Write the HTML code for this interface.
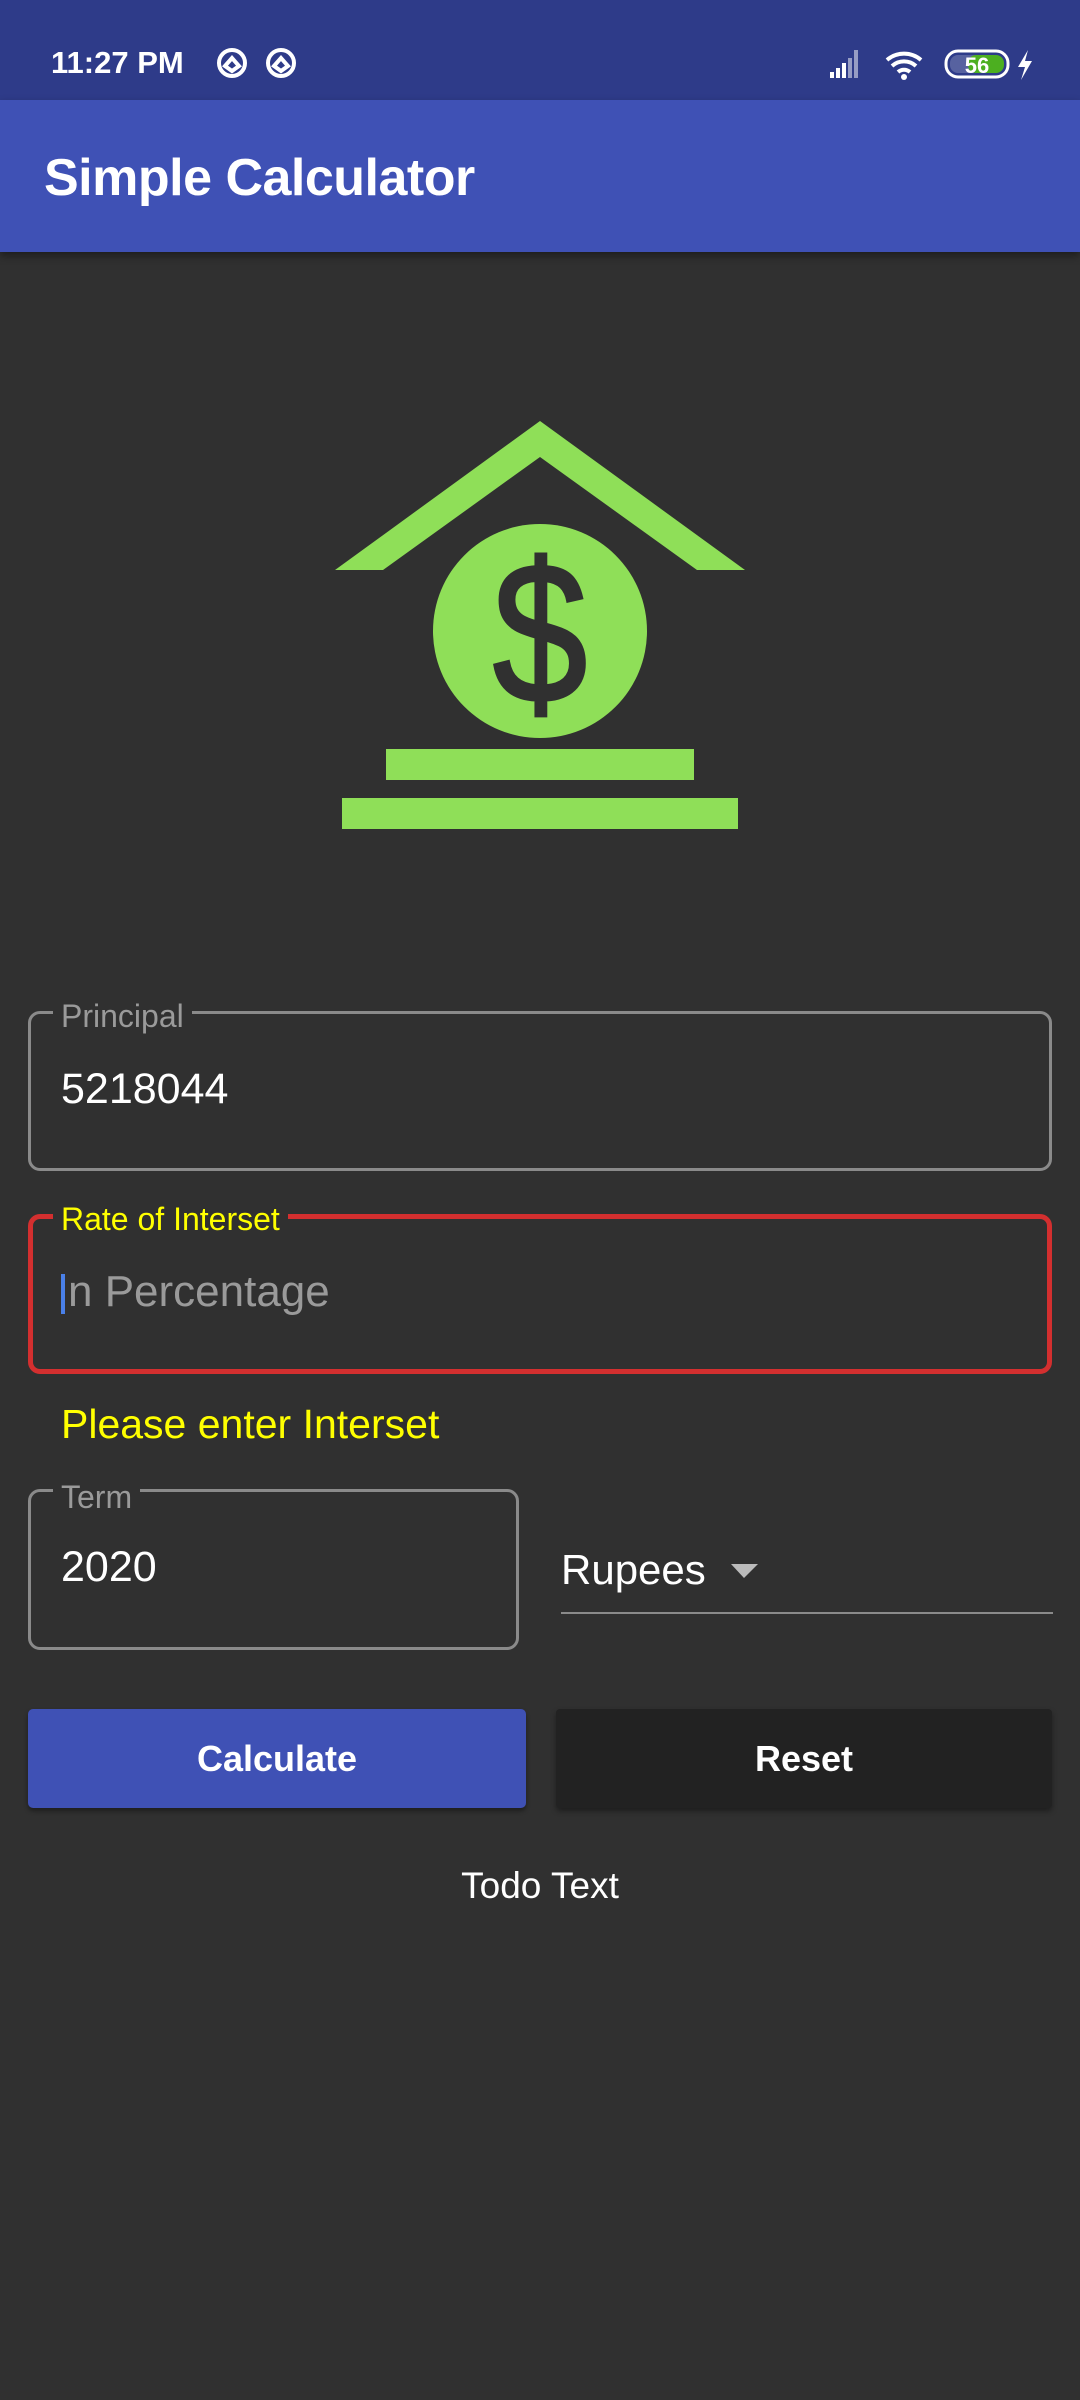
<!DOCTYPE html>
<html><head><meta charset="utf-8"><style>
*{margin:0;padding:0;box-sizing:border-box}
body{width:1080px;height:2400px;background:#303030;font-family:"Liberation Sans",sans-serif;position:relative;overflow:hidden}
.a{position:absolute}
.box{position:absolute;border:3px solid #8a8a8a;border-radius:12px}
.lbl{position:absolute;background:#303030;padding:0 8px;font-size:32px;color:#9a9a9a;line-height:34px}
.val{position:absolute;font-size:43px;color:#fff;line-height:46px}
</style></head><body>
<div class="a" style="left:0;top:0;width:1080px;height:100px;background:#2e3b89"></div>
<div class="a" style="left:51px;top:44px;font-size:31px;color:#fff;font-weight:bold;line-height:38px">11:27 PM</div>
<svg class="a" style="left:213px;top:46px" width="90" height="34" viewBox="0 0 90 34"><g fill="none" stroke="#fff" stroke-width="4"><circle cx="19" cy="17" r="13"/><path d="M12 20l7-8 7 8-7 5z"/><circle cx="68" cy="17" r="13"/><path d="M61 20l7-8 7 8-7 5z"/></g></svg>
<svg class="a" style="left:828px;top:46px" width="230" height="36" viewBox="0 0 230 36"><g fill="#fff"><rect x="2" y="26" width="4" height="6"/><rect x="8" y="22" width="4" height="10"/><rect x="14" y="17" width="4" height="15"/><rect x="20" y="12" width="4" height="20" opacity=".5"/><rect x="26" y="4" width="4" height="28" opacity=".5"/></g>
<g fill="none" stroke="#fff" stroke-width="4"><path d="M59 14a26 26 0 0 1 34 0"/><path d="M64 20a18 18 0 0 1 24 0"/><path d="M70 26a9 9 0 0 1 12 0"/></g><circle cx="76" cy="31" r="3" fill="#fff"/>
<rect x="118" y="5" width="62" height="26" rx="12" fill="none" stroke="#fff" stroke-width="3"/><rect x="122" y="9" width="32" height="18" rx="8" fill="#fff" opacity=".2"/><rect x="140" y="9" width="36" height="18" rx="8" fill="#4caf20"/>
<text x="149" y="27" font-size="22" font-weight="bold" fill="#fff" text-anchor="middle" font-family="Liberation Sans">56</text>
<path d="M200 4l-10 17h7l-4 13 11-19h-7z" fill="#fff"/></svg>
<div class="a" style="left:0;top:100px;width:1080px;height:152px;background:#3f51b5;box-shadow:0 4px 8px rgba(0,0,0,.4)"></div>
<div class="a" style="left:44px;top:148px;font-size:52px;color:#fff;font-weight:bold;line-height:60px;letter-spacing:-0.5px">Simple Calculator</div>
<svg class="a" style="left:0;top:0" width="1080" height="900"><g fill="#8fdf58"><path d="M540 421L745 570H697L540 457L383 570H335Z"/><circle cx="540" cy="631" r="107"/><rect x="386" y="749" width="308" height="31"/><rect x="342" y="798" width="396" height="31"/></g>
<text x="0" y="0" font-size="200" fill="#303030" stroke="#303030" stroke-width="3" text-anchor="middle" font-family="Liberation Sans" transform="translate(540 702) scale(0.85 1)">$</text></svg>
<div class="box" style="left:28px;top:1011px;width:1024px;height:160px"></div>
<div class="lbl" style="left:53px;top:999px">Principal</div>
<div class="val" style="left:61px;top:1066px">5218044</div>
<div class="box" style="left:28px;top:1214px;width:1024px;height:160px;border:5px solid #d32f2f"></div>
<div class="lbl" style="left:53px;top:1202px;color:#ffff00">Rate of Interset</div>
<div class="a" style="left:61px;top:1274px;width:4px;height:40px;background:#4a80e8"></div>
<div class="val" style="left:68px;top:1269px;color:#9a9a9a;font-size:44px">n Percentage</div>
<div class="val" style="left:61px;top:1401px;color:#ffff00;font-size:41px">Please enter Interset</div>
<div class="box" style="left:28px;top:1489px;width:491px;height:161px"></div>
<div class="lbl" style="left:53px;top:1480px">Term</div>
<div class="val" style="left:61px;top:1544px">2020</div>
<div class="val" style="left:561px;top:1547px;font-size:42px">Rupees</div>
<svg class="a" style="left:730px;top:1563px" width="30" height="16"><path d="M1 1h27L14 15z" fill="#bbb"/></svg>
<div class="a" style="left:561px;top:1612px;width:492px;height:2px;background:#8a8a8a"></div>
<div class="a" style="left:28px;top:1709px;width:498px;height:99px;background:#3f51b5;border-radius:5px;box-shadow:0 3px 5px rgba(0,0,0,.4);color:#fff;font-size:36px;font-weight:bold;text-align:center;line-height:99px">Calculate</div>
<div class="a" style="left:556px;top:1709px;width:496px;height:99px;background:#222;border-radius:4px;box-shadow:0 3px 6px rgba(0,0,0,.4);color:#fff;font-size:36px;font-weight:bold;text-align:center;line-height:99px">Reset</div>
<div class="a" style="left:0;top:1864px;width:1080px;text-align:center;color:#fff;font-size:37px;line-height:44px">Todo Text</div>
</body></html>
